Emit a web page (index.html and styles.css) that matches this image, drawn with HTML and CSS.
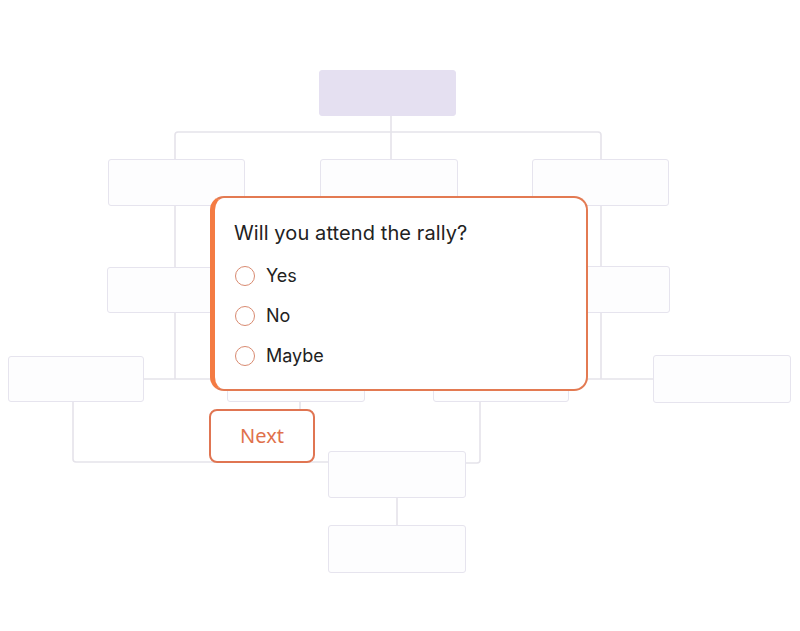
FILE: index.html
```html
<!DOCTYPE html>
<html lang="en">
<head>
<meta charset="utf-8">
<title>Rally poll</title>
<link rel="stylesheet" href="styles.css">
</head>
<body>
<div class="canvas">
  <svg class="wires" width="800" height="631" viewBox="0 0 800 631" aria-hidden="true">
    <g fill="none" stroke="#e5e3ea" stroke-width="1.6">
      <path d="M391 116 V159"/>
      <path d="M175 159 V135 Q175 132 178 132 H598 Q601 132 601 135 V159"/>
      <path d="M175 206 V267"/>
      <path d="M175 313 V379"/>
      <path d="M601 206 V266"/>
      <path d="M601 313 V379"/>
      <path d="M143 379 H228"/>
      <path d="M569 379 H653"/>
      <path d="M73 402 V459 Q73 462 76 462 H328"/>
      <path d="M300 402 V462"/>
      <path d="M480 402 V460 Q480 463 477 463 H466"/>
      <path d="M397 498 V525"/>
    </g>
  </svg>

  <div class="node node-root" style="left:319px;top:70px;width:137px;height:46px"></div>

  <div class="node" style="left:108px;top:159px;width:137px;height:47px"></div>
  <div class="node" style="left:320px;top:159px;width:138px;height:47px"></div>
  <div class="node" style="left:532px;top:159px;width:137px;height:47px"></div>

  <div class="node" style="left:107px;top:267px;width:138px;height:46px"></div>
  <div class="node" style="left:532px;top:266px;width:138px;height:47px"></div>

  <div class="node" style="left:8px;top:356px;width:136px;height:46px"></div>
  <div class="node" style="left:227px;top:356px;width:138px;height:46px"></div>
  <div class="node" style="left:433px;top:356px;width:136px;height:46px"></div>
  <div class="node" style="left:653px;top:355px;width:138px;height:48px"></div>

  <div class="node" style="left:328px;top:451px;width:138px;height:47px"></div>
  <div class="node" style="left:328px;top:525px;width:138px;height:48px"></div>

  <form class="poll-card">
    <h1 class="poll-question">Will you attend the rally?</h1>
    <div class="poll-options">
      <label class="poll-option"><span class="radio"></span><span class="option-label">Yes</span></label>
      <label class="poll-option"><span class="radio"></span><span class="option-label">No</span></label>
      <label class="poll-option"><span class="radio"></span><span class="option-label">Maybe</span></label>
    </div>
  </form>

  <button class="next-btn" type="button">Next</button>
</div>
</body>
</html>
```

FILE: styles.css
```css
* {
  box-sizing: border-box;
}

html, body {
  margin: 0;
  padding: 0;
  background: #ffffff;
}

body {
  font-family: Inter, "Noto Sans", "Liberation Sans", sans-serif;
  color: #222222;
}

.canvas {
  position: relative;
  width: 800px;
  height: 631px;
  overflow: hidden;
  background: #ffffff;
}

.wires {
  position: absolute;
  left: 0;
  top: 0;
}

.node {
  position: absolute;
  background: #fdfdfe;
  border: 1.5px solid #e6e4ee;
  border-radius: 3px;
}

.node-root {
  background: #e5e0f1;
  border-color: #e5e0f1;
}

.poll-card {
  position: absolute;
  left: 210px;
  top: 196px;
  width: 378px;
  height: 195px;
  margin: 0;
  background: #ffffff;
  border: 2px solid #e37a52;
  border-left: 5px solid #f47b43;
  border-radius: 14px;
  padding: 23px 20px 0 19px;
  display: flex;
  flex-direction: column;
  gap: 19px;
}

.poll-question {
  margin: 0;
  font-size: 20px;
  line-height: 24px;
  font-weight: 400;
  color: #222222;
  letter-spacing: 0.1px;
}

.poll-options {
  display: flex;
  flex-direction: column;
  gap: 16px;
}

.poll-option {
  display: flex;
  align-items: center;
  gap: 11px;
  height: 24px;
  padding-left: 1px;
}

.radio {
  width: 20px;
  height: 20px;
  border: 1.5px solid #d98a70;
  border-radius: 50%;
  flex: none;
}

.option-label {
  font-size: 18px;
  line-height: 24px;
  color: #222222;
}

.next-btn {
  position: absolute;
  left: 209px;
  top: 409px;
  width: 106px;
  height: 54px;
  background: #ffffff;
  border: 2px solid #e07552;
  border-radius: 8px;
  color: #e0714c;
  font-family: "Noto Sans", Inter, sans-serif;
  font-size: 20px;
  line-height: 24px;
  padding: 0;
  cursor: pointer;
}
```
